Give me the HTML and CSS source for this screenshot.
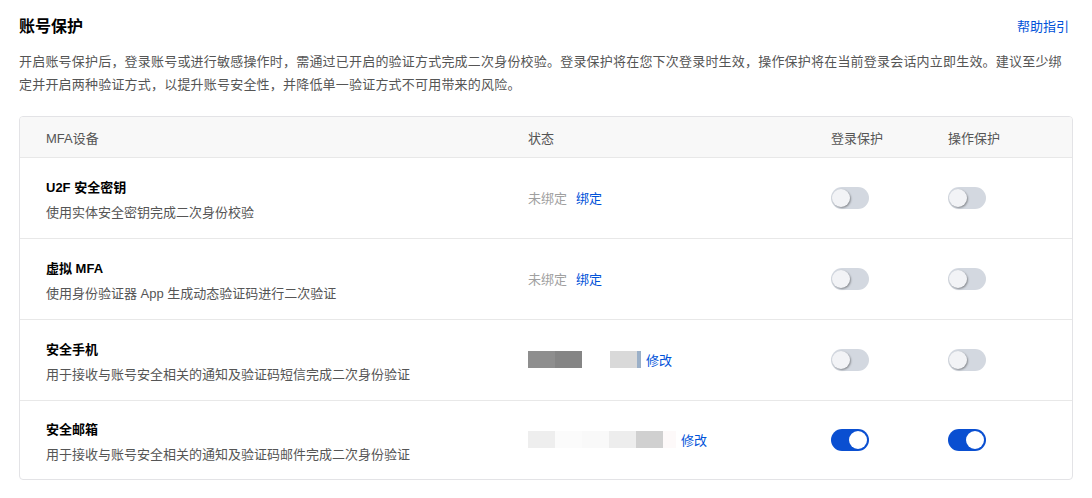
FILE: index.html
```html
<!DOCTYPE html>
<html lang="zh-CN">
<head>
    <meta charset="UTF-8">
    <meta name="viewport" content="width=device-width, initial-scale=1.0">
    <title>账号保护</title>
    <link rel="stylesheet" href="styles.css">
</head>
<body>
    <div class="page">
        <div class="page-head">
            <h2>账号保护</h2>
            <a class="link" href="#">帮助指引</a>
        </div>

        <p class="intro">
            开启账号保护后，登录账号或进行敏感操作时，需通过已开启的验证方式完成二次身份校验。登录保护将在您下次登录时生效，操作保护将在当前登录会话内立即生效。建议至少绑定并开启两种验证方式，以提升账号安全性，并降低单一验证方式不可用带来的风险。
        </p>

        <div class="mfa-table">
            <div class="row head">
                <div>MFA设备</div>
                <div>状态</div>
                <div>登录保护</div>
                <div>操作保护</div>
            </div>

            <div class="row">
                <div class="device">
                    <div class="device-name">U2F 安全密钥</div>
                    <div class="device-desc">使用实体安全密钥完成二次身份校验</div>
                </div>
                <div class="status">
                    <span class="muted">未绑定</span>
                    <a class="link" href="#">绑定</a>
                </div>
                <div><span class="switch"></span></div>
                <div><span class="switch"></span></div>
            </div>

            <div class="row">
                <div class="device">
                    <div class="device-name">虚拟 MFA</div>
                    <div class="device-desc">使用身份验证器 App 生成动态验证码进行二次验证</div>
                </div>
                <div class="status">
                    <span class="muted">未绑定</span>
                    <a class="link" href="#">绑定</a>
                </div>
                <div><span class="switch"></span></div>
                <div><span class="switch"></span></div>
            </div>

            <div class="row">
                <div class="device">
                    <div class="device-name">安全手机</div>
                    <div class="device-desc">用于接收与账号安全相关的通知及验证码短信完成二次身份验证</div>
                </div>
                <div class="status">
                    <!-- masked phone number -->
                    <span class="mask">
                        <i style="width:27px;background:#8e8e8e"></i><i style="width:27px;background:#858585"></i><i style="width:28px;background:#fff"></i><i style="width:27px;background:#d9d9d9"></i><i style="width:4px;background:#9bb0c8"></i>
                    </span>
                    <a class="link" href="#">修改</a>
                </div>
                <div><span class="switch"></span></div>
                <div><span class="switch"></span></div>
            </div>

            <div class="row">
                <div class="device">
                    <div class="device-name">安全邮箱</div>
                    <div class="device-desc">用于接收与账号安全相关的通知及验证码邮件完成二次身份验证</div>
                </div>
                <div class="status">
                    <!-- masked email address -->
                    <span class="mask">
                        <i style="width:27px;background:#eeeeee"></i><i style="width:27px;background:#fbfbfb"></i><i style="width:27px;background:#f9f9f9"></i><i style="width:27px;background:#ededed"></i><i style="width:27px;background:#d0d0d0"></i><i style="width:13px;background:#fdf9f9"></i>
                    </span>
                    <a class="link" href="#">修改</a>
                </div>
                <div><span class="switch on"></span></div>
                <div><span class="switch on"></span></div>
            </div>
        </div>
    </div>
</body>
</html>
```

FILE: styles.css
```css
* {
    margin: 0;
    padding: 0;
    box-sizing: border-box;
}

body {
    font-family: "Liberation Sans", "Noto Sans CJK SC", sans-serif;
    font-size: 13px;
    color: #000;
    background: #fff;
}

.page {
    padding: 13px 19px 0;
}

.page-head {
    display: flex;
    align-items: center;
    justify-content: space-between;
    height: 24px;
}

.page-head h2 {
    font-size: 16px;
    font-weight: 700;
    color: #000;
}

.page-head .link {
    margin-right: 4px;
}

.link {
    color: #0052d9;
    text-decoration: none;
}

.intro {
    margin-top: 13px;
    color: #555;
    line-height: 23px;
    letter-spacing: 0.2px;
}

.mfa-table {
    margin-top: 20px;
    border: 1px solid #e3e3e6;
    border-radius: 4px;
    overflow: hidden;
    width: 1054px;
}

.row {
    display: grid;
    grid-template-columns: 482px 303px 117px 1fr;
    align-items: center;
    padding-left: 26px;
    height: 81px;
    border-top: 1px solid #e8e8e8;
}

.row:last-child {
    height: 79px;
}

.row.head {
    height: 40px;
    border-top: none;
    background: #f8f8f8;
    color: #555;
}

.device {
    padding-top: 2px;
}

.device-name {
    font-weight: 700;
    color: #000;
}

.device-desc {
    margin-top: 6px;
    color: #555;
}

.status {
    display: flex;
    align-items: center;
    gap: 9px;
    margin-top: -1px;
}

.muted {
    color: #a0a0a0;
}

.mask {
    display: flex;
    height: 17px;
}

.mask i {
    display: block;
    height: 100%;
}

.status .mask + .link {
    margin-left: -4px;
}

.switch {
    display: block;
    position: relative;
    width: 38px;
    height: 22px;
    border-radius: 11px;
    background: #d3d8e0;
}

.switch::after {
    content: "";
    position: absolute;
    top: 2px;
    left: 1px;
    width: 18px;
    height: 18px;
    border-radius: 50%;
    background: #f2f3f6;
    box-shadow: 1px 1px 2px rgba(0, 0, 0, 0.35);
}

.switch.on {
    background: #0a4fd1;
}

.switch.on::after {
    left: auto;
    right: 2px;
    background: #fff;
    box-shadow: none;
}
```
